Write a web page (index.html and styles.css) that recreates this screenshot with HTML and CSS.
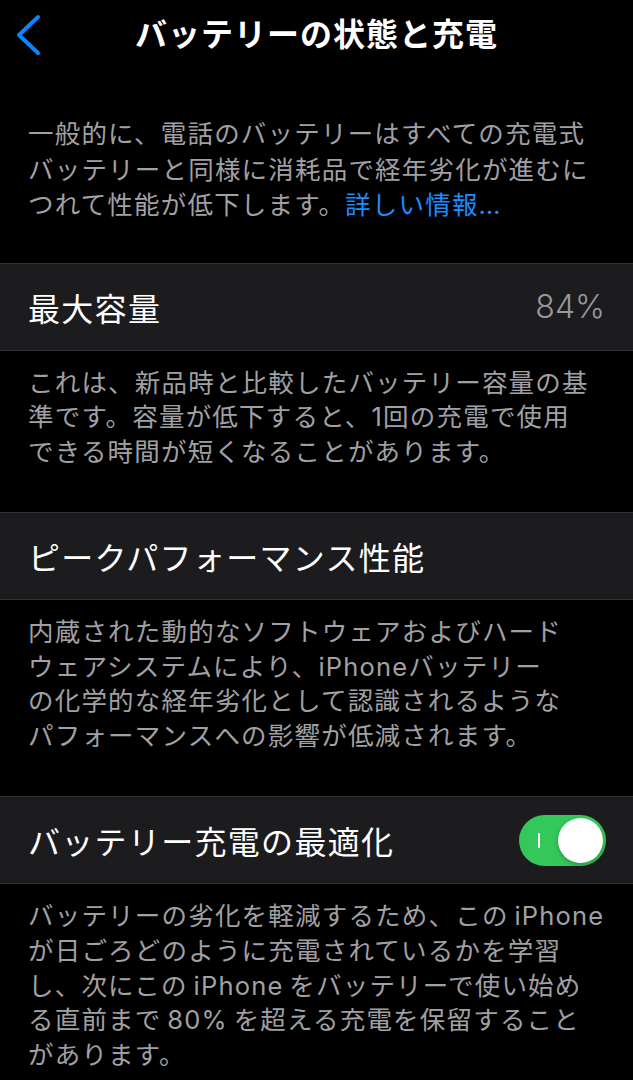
FILE: index.html
```html
<!DOCTYPE html>
<html lang="ja">
<head>
<meta charset="utf-8">
<title>バッテリーの状態と充電</title>
<link rel="stylesheet" href="styles.css">
</head>
<body>
<div class="screen">
  <header class="nav">
    <div class="nav-left">
      <svg class="back" width="30" height="44" viewBox="0 0 30 44" aria-hidden="true">
        <polyline points="25,4 6,22 25,40" fill="none" stroke="#0a84ff" stroke-width="4" stroke-linecap="round" stroke-linejoin="round"/>
      </svg>
    </div>
    <h1 class="title">バッテリーの状態と充電</h1>
    <div class="nav-right"></div>
  </header>

  <p class="intro">一般的に、電話のバッテリーはすべての充電式<br>バッテリーと同様に消耗品で経年劣化が進むに<br>つれて性能が低下します。<span class="link">詳しい情報…</span></p>

  <div class="row">
    <span class="label">最大容量</span>
    <span class="value">84%</span>
  </div>
  <p class="footer">これは、新品時と比較したバッテリー容量の基<br>準です。容量が低下すると、1回の充電で使用<br>できる時間が短くなることがあります。</p>

  <div class="row">
    <span class="label">ピークパフォーマンス性能</span>
  </div>
  <p class="footer">内蔵された動的なソフトウェアおよびハード<br>ウェアシステムにより、iPhoneバッテリー<br>の化学的な経年劣化として認識されるような<br>パフォーマンスへの影響が低減されます。</p>

  <div class="row">
    <span class="label">バッテリー充電の最適化</span>
    <span class="toggle on"><span class="toggle-mark"></span><span class="knob"></span></span>
  </div>
  <p class="footer">バッテリーの劣化を軽減するため、この&#8201;iPhone<br>が日ごろどのように充電されているかを学習<br>し、次にこの&#8201;iPhone&#8201;をバッテリーで使い始め<br>る直前まで&#8201;80%&#8201;を超える充電を保留すること<br>があります。</p>
</div>
</body>
</html>
```

FILE: styles.css
```css
html, body {
  margin: 0;
  padding: 0;
  background: #000;
}
body {
  font-family: Inter, "Noto Sans CJK JP", sans-serif;
  color: #fff;
  width: 633px;
  height: 1080px;
  overflow: hidden;
}
.screen {
  display: flex;
  flex-direction: column;
}
.nav {
  height: 70px;
  display: grid;
  grid-template-columns: 1fr auto 1fr;
  align-items: center;
}
.nav-left {
  padding-left: 13px;
  display: flex;
  align-items: center;
}
.back {
  display: block;
}
.title {
  margin: 0;
  font-size: 32px;
  font-weight: 700;
  letter-spacing: 1px;
  line-height: 40px;
  color: #fff;
}
.intro {
  margin: 46px 0 40px;
  padding: 0 28px;
  font-size: 25.5px;
  line-height: 35.5px;
  letter-spacing: 1.2px;
  color: #a0a0a5;
}
.link {
  color: #1a8cff;
}
.row {
  height: 86px;
  background: #1c1c1e;
  border-top: 1px solid #333336;
  border-bottom: 1px solid #333336;
  padding: 0 28px 0 28px;
  display: flex;
  align-items: center;
  justify-content: space-between;
}
.label {
  font-size: 32px;
  letter-spacing: 1.3px;
  color: #fff;
}
.value {
  font-size: 32px;
  font-weight: 300;
  color: #98989e;
}
.footer {
  margin: 0;
  padding: 15px 28px 42px;
  font-size: 25.5px;
  line-height: 34.8px;
  letter-spacing: 1.2px;
  color: #a0a0a5;
}
.toggle {
  position: relative;
  width: 87px;
  height: 51px;
  border-radius: 26px;
  background: #34c759;
  margin-right: -1px;
  flex: none;
}
.toggle-mark {
  position: absolute;
  left: 19px;
  top: 18px;
  width: 2px;
  height: 15px;
  background: #fff;
  border-radius: 1px;
}
.knob {
  position: absolute;
  right: 3px;
  top: 3px;
  width: 45px;
  height: 45px;
  border-radius: 50%;
  background: #fff;
  box-shadow: 0 2px 4px rgba(0,0,0,0.25);
}
```
